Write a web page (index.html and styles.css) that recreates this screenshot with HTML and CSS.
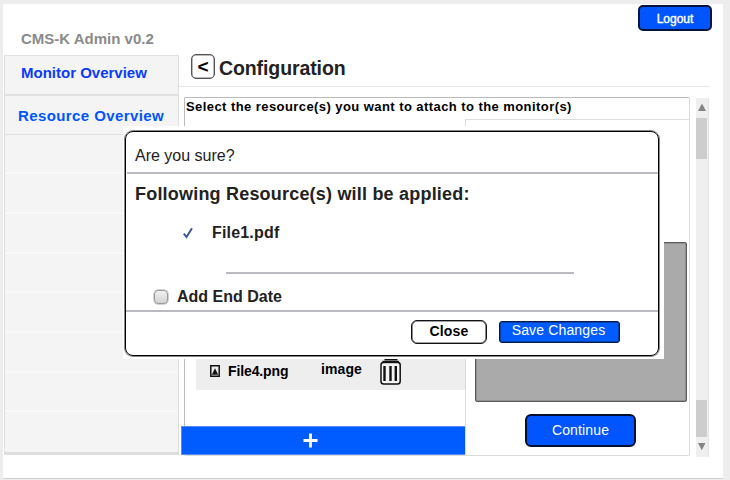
FILE: index.html
```html
<!DOCTYPE html>
<html lang="en">
<head>
<meta charset="utf-8">
<title>CMS-K Admin</title>
<link rel="stylesheet" href="styles.css">
</head>
<body>
<div class="window">
  <aside class="sidebar">
    <div class="brand">CMS-K Admin v0.2</div>
    <nav class="nav">
      <a class="nav-item monitor">Monitor Overview</a>
      <a class="nav-item resource">Resource Overview</a>
      <span class="slot"></span><span class="slot"></span><span class="slot"></span><span class="slot"></span>
      <span class="slot"></span><span class="slot"></span><span class="slot"></span><span class="slot"></span>
    </nav>
  </aside>
  <main class="main">
    <header class="header">
      <button class="back">&lt;</button>
      <h1>Configuration</h1>
      <button class="logout">Logout</button>
    </header>
    <div class="content">
      <section class="panel">
        <div class="hint">Select the resource(s) you want to attach to the monitor(s)</div>
        <div class="columns">
          <div class="files">
            <div class="file-row">
              <svg class="pic" viewBox="0 0 10 12"><path d="M.8.8h8.4v10.4H.8z" fill="#eee" stroke="#111" stroke-width="1.5"/><path d="M1.8 9.8 5 3.2l3.2 6.6z" fill="#111"/></svg>
              <span class="name">File4.png</span>
              <span class="type">image</span>
              <svg class="trash" viewBox="0 0 22 28"><path d="M4.5 1.2h13" stroke="#111" stroke-width="2.5"/><rect x="1" y="4.2" width="19.2" height="21.8" rx="2.8" fill="#f4f4f4" stroke="#111" stroke-width="1.5"/><path d="M2.5 4h16.5" stroke="#111" stroke-width="2.4"/><path d="M4.5 8v15M10.5 8v15M15.8 8v15" stroke="#111" stroke-width="2.4"/></svg>
            </div>
            <button class="add" aria-label="Add"><svg viewBox="0 0 16 16"><path d="M8 .5v15M.5 8h15" stroke="#fff" stroke-width="3"/></svg></button>
          </div>
          <div class="preview">
            <div class="screen"></div>
            <button class="continue">Continue</button>
          </div>
        </div>
      </section>
      <div class="scroll">
        <svg class="arrow" viewBox="0 0 13 19"><path d="M2 12.5 6 5l4 7.5z" fill="#858585"/></svg>
        <div class="thumb"></div>
        <div class="track"></div>
        <div class="thumb low"></div>
        <svg class="arrow" viewBox="0 0 13 19"><path d="M2 5.5h7.5L5.8 12.8z" fill="#858585"/></svg>
      </div>
    </div>
  </main>
</div>
<div class="overlay">
  <div class="dialog">
    <div class="dialog-head">Are you sure?</div>
    <div class="dialog-body">
      <h2>Following Resource(s) will be applied:</h2>
      <div class="picked"><svg viewBox="0 0 10 12"><path d="M.8 6.6 3.5 10 9 1.2" fill="none" stroke="#3b5998" stroke-width="2"/></svg><span>File1.pdf</span></div>
      <div class="divider"></div>
      <div class="option"><span class="box"></span><span>Add End Date</span></div>
    </div>
    <div class="dialog-foot">
      <button class="close">Close</button>
      <button class="save">Save Changes</button>
    </div>
  </div>
</div>
</body>
</html>
```
FILE: styles.css
```css
* { box-sizing: border-box; }
body {
  margin: 0;
  width: 730px;
  height: 480px;
  overflow: hidden;
  padding-top: 4px;
  background: #ededed;
  font-family: "Liberation Sans", Arial, sans-serif;
  color: #222;
}
button { font-family: inherit; padding: 0; margin: 0; display: block; }
svg { display: block; flex: none; }
h1, h2 { margin: 0; }

.window {
  display: flex;
  width: 720px;
  height: 474px;
  margin-left: 3px;
  padding-left: 1px;
  background: #fff;
  box-shadow: 0 1px 0 #d0d0d0;
}

.sidebar { width: 175px; flex: none; }
.brand {
  height: 51px;
  padding: 26px 0 0 17px;
  font: bold 15px/17px "Liberation Sans", Arial, sans-serif;
  color: #8b8b8b;
}
.nav {
  display: flex;
  flex-direction: column;
  height: 400px;
  background: #f4f4f4;
  border: 1px solid #e0e0e0;
  border-right-color: #dedede;
  border-bottom: 3px solid #dedede;
}
.nav-item {
  height: 40px;
  border-bottom: 2px solid #e0e0e0;
  font-weight: bold;
  font-size: 15px;
  line-height: 17px;
}
.monitor { padding: 8px 0 0 16px; color: #0a3cff; }
.resource { height: 39px; padding: 11px 0 0 13px; color: #0055ff; letter-spacing: .4px; border-bottom-width: 1px; }
.slot { height: 40px; border-bottom: 2px solid #f8f8f8; }
.slot:last-child { border: 0; }

.main { width: 541px; }
.header {
  display: flex;
  width: 531px;
  height: 83px;
  border-bottom: 1px solid #e6e6e6;
}
.back {
  width: 24px;
  height: 25px;
  margin: 50px 4px 0 12px;
  border: 1px solid #555;
  box-shadow: inset 0 0 0 .5px #777;
  border-radius: 5px;
  background: #fff;
  font-size: 19px;
  font-weight: bold;
  line-height: 20px;
  color: #000;
}
h1 { margin-top: 52px; font-size: 19.5px; line-height: 24px; letter-spacing: -.1px; }
.logout {
  width: 74px;
  height: 26px;
  margin: 1px -2px 0 auto;
  border: 2px solid #06133a;
  border-radius: 5px;
  background: #0055ff;
  color: #fff;
  font-size: 12px;
  line-height: 20px;
  padding-top: 2px;
  -webkit-text-stroke: .4px #fff;
}
.content { display: flex; padding: 10px 0 0 5px; }
.panel {
  width: 506px;
  height: 359px;
  border: 1px solid #dcdcdc;
  border-top-color: #bbb;
  border-left-color: #bbb;
  border-radius: 2px;
}
.hint {
  height: 21px;
  padding-left: 1px;
  font-size: 13px;
  font-weight: bold;
  line-height: 17px;
  letter-spacing: .43px;
  color: #000;
  white-space: nowrap;
}
.columns { display: flex; height: 336px; }
.files {
  display: flex;
  flex-direction: column;
  justify-content: flex-end;
  width: 280px;
}
.file-row {
  display: flex;
  height: 50px;
  margin: 0 0 36px 11px;
  background: #eee;
  font-weight: bold;
  font-size: 14px;
  line-height: 16px;
  color: #000;
}
.pic { width: 10px; height: 12px; margin: 25px 8px 0 14px; }
.name { width: 92px; padding-top: 23px; letter-spacing: -.12px; }
.type { width: 60px; padding: 21px 0 0 1px; letter-spacing: .1px; }
.trash { width: 22px; height: 28px; margin-top: 18px; }
.add {
  width: 285px;
  height: 29px;
  margin-left: -4px;
  padding-left: 121px;
  border: 1px solid #568cf4;
  background: #005cff;
}
.add svg { width: 15px; height: 15px; }
.preview {
  width: 225px;
  border: 1px solid #ddd;
  border-right: 0;
  border-bottom: 0;
  padding: 122px 0 0 9px;
}
.screen {
  width: 212px;
  height: 160px;
  border: 1px solid #5b5b5b;
  box-shadow: inset 0 0 0 .5px #777;
  border-radius: 2px;
  background: #aaa;
}
.continue {
  width: 111px;
  height: 33px;
  margin: 12px 0 0 50px;
  padding-bottom: 1px;
  border: 2px solid #04102e;
  border-radius: 6px;
  background: #0055ff;
  color: #fff;
  font-size: 14px;
  letter-spacing: .15px;
}
.scroll {
  display: flex;
  flex-direction: column;
  width: 13px;
  height: 359px;
  margin: 1px 0 0 6px;
  background: #efefef;
  border-right: 1px solid #e4e4e4;
}
.arrow { width: 13px; height: 20px; }
.thumb { height: 41px; width: 11px; background: #cdcdcd; }
.track { flex: 1; }
.low { height: 37px; }

.overlay {
  position: absolute;
  left: 123px;
  top: 126px;
  width: 541px;
  height: 233px;
  padding: 5px 0 0 2px;
  background: #fff;
}
.dialog {
  display: flex;
  flex-direction: column;
  width: 534px;
  height: 225px;
  border: 1px solid #000;
  border-radius: 8px;
  box-shadow: 0 0 0 1px #888;
}
.dialog-head {
  height: 42px;
  margin-left: 1px;
  padding: 15px 0 0 8px;
  border-bottom: 2px solid #babac1;
  font-size: 16px;
  line-height: 18px;
}
.dialog-body { height: 138px; padding-left: 9px; border-bottom: 2px solid #babac1; font-weight: bold; }
h2 { padding-top: 9px; font-size: 18px; line-height: 22px; letter-spacing: .2px; }
.picked { display: flex; align-items: center; height: 20px; margin: 18px 0 0 48px; font-size: 16px; letter-spacing: .18px; }
.picked svg { width: 10px; height: 12px; margin-right: 19px; }
.divider { width: 348px; height: 2px; margin: 29px 0 0 91px; background: #babac1; }
.option { display: flex; align-items: center; height: 20px; margin: 13px 0 0 19px; font-size: 16px; }
.box {
  width: 14px;
  height: 14px;
  margin-right: 9px;
  border: 1px solid #999;
  border-radius: 4px;
  background: linear-gradient(#f2f2f2, #d2d2d2);
  box-shadow: 0 0 0 .5px #aaa;
}
.dialog-foot { display: flex; padding: 8px 0 0 285px; }
.close {
  width: 76px;
  height: 24px;
  padding-bottom: 2px;
  border: 1px solid #111;
  box-shadow: inset 0 0 0 .6px #444;
  border-radius: 6px;
  background: #fff;
  color: #000;
  font-size: 14px;
  font-weight: bold;
  letter-spacing: .15px;
}
.save {
  width: 121px;
  height: 22px;
  margin: 1px 0 0 12px;
  border: 1px solid #071a4a;
  box-shadow: inset 0 0 0 .6px #0b2760;
  border-radius: 3px;
  background: #005cff;
  color: #fff;
  font-size: 14px;
  line-height: 16px;
  padding: 0 2px 4px 0;
  letter-spacing: .15px;
}
```
